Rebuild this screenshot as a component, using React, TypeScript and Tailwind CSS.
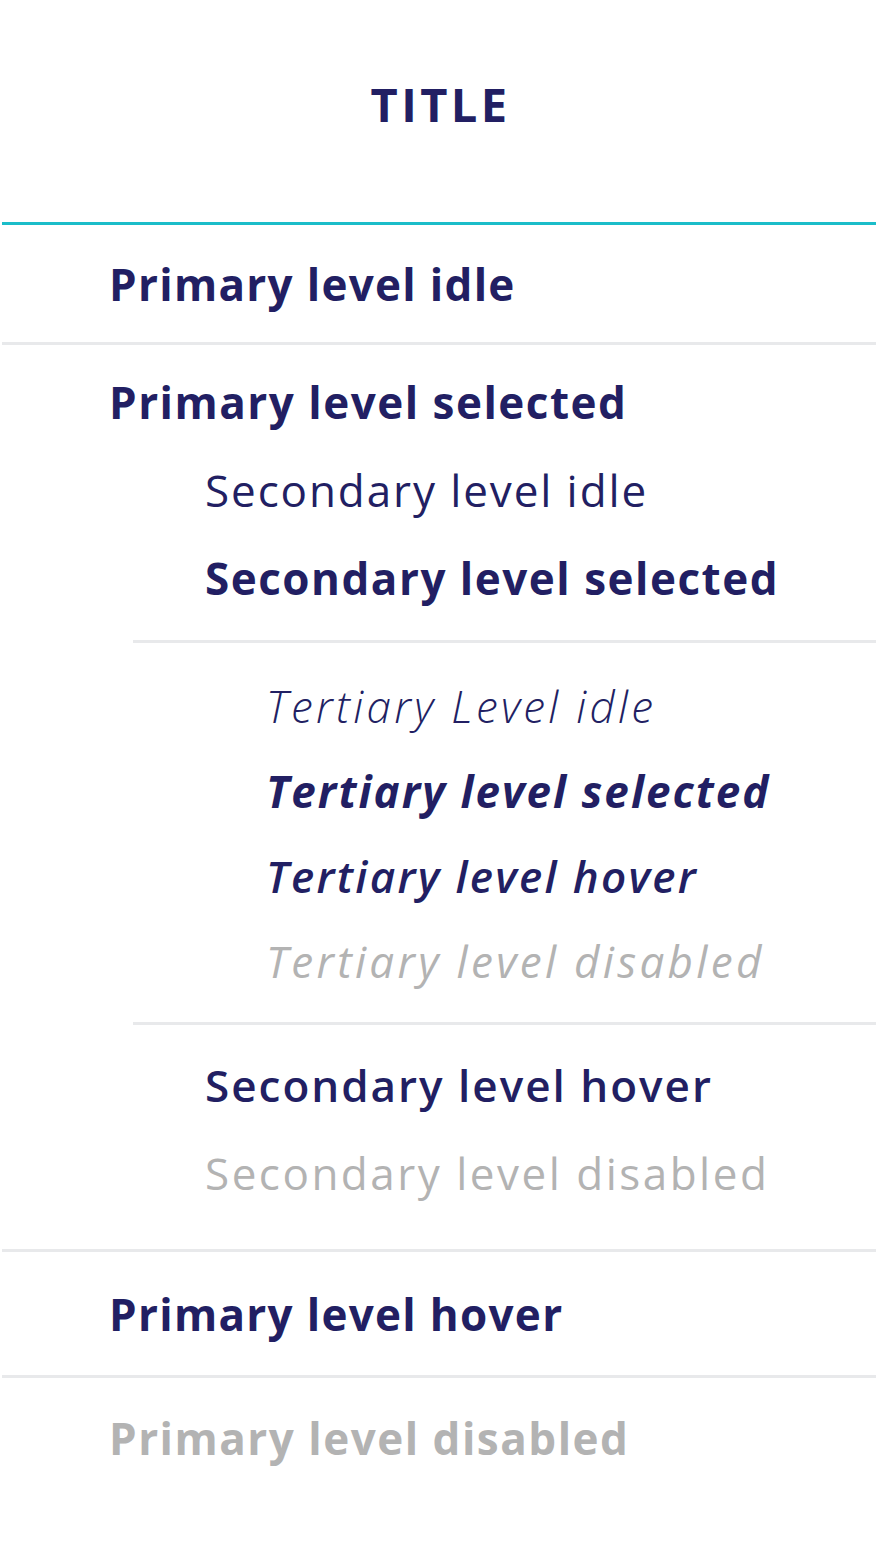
const navy = 'text-[#221f63]';
const muted = 'text-[#b3b3b3]';

function Row({ children, className }: { children: React.ReactNode; className: string }) {
  return <div className={`flex items-center whitespace-nowrap ${className}`}>{children}</div>;
}

export default function App() {
  return (
    <div className="min-h-screen bg-white font-['Open_Sans',sans-serif] text-[44px] leading-none">
      <div className="ml-[2px] mr-[6px]">
        <div className="h-[225px] pb-[14px] flex items-center justify-center border-b-[3px] border-[#1bbdc9]">
          <h1 className={`text-[47px] font-bold tracking-[3.4px] pl-[3px] ${navy}`}>TITLE</h1>
        </div>

        <Row className={`h-[120px] pl-[107px] font-bold tracking-[1.3px] border-b-[3px] border-[#e8e9eb] ${navy}`}>
          Primary level idle
        </Row>

        <div className="pt-[13px] pb-[18px]">
          <Row className={`h-[88px] pl-[107px] font-bold tracking-[1.5px] ${navy}`}>Primary level selected</Row>
          <Row className={`h-[88px] pl-[203px] font-normal tracking-[1.9px] ${navy}`}>Secondary level idle</Row>
          <Row className={`h-[88px] pl-[203px] font-bold tracking-[1.5px] ${navy}`}>Secondary level selected</Row>
        </div>

        <div className="ml-[131px] pt-[20px] pb-[19px] border-y-[3px] border-[#e8e9eb]">
          <Row className={`h-[85px] pl-[133px] italic font-light tracking-[3.3px] ${navy}`}>Tertiary Level idle</Row>
          <Row className={`h-[85px] pl-[133px] italic font-bold tracking-[2px] ${navy}`}>Tertiary level selected</Row>
          <Row className={`h-[85px] pl-[133px] italic font-semibold tracking-[2.3px] ${navy}`}>Tertiary level hover</Row>
          <Row className={`h-[85px] pl-[133px] italic font-normal tracking-[3.3px] ${muted}`}>Tertiary level disabled</Row>
        </div>

        <div className="pt-[16px] pb-[32px] border-b-[3px] border-[#e8e9eb]">
          <Row className={`h-[88px] pl-[203px] font-semibold tracking-[2px] ${navy}`}>Secondary level hover</Row>
          <Row className={`h-[88px] pl-[203px] font-normal tracking-[2.5px] ${muted}`}>Secondary level disabled</Row>
        </div>

        <Row className={`h-[126px] pl-[107px] font-bold tracking-[1.3px] border-b-[3px] border-[#e8e9eb] ${navy}`}>
          Primary level hover
        </Row>

        <Row className={`h-[120px] pl-[107px] font-bold tracking-[1.5px] ${muted}`}>Primary level disabled</Row>
      </div>
    </div>
  );
}
